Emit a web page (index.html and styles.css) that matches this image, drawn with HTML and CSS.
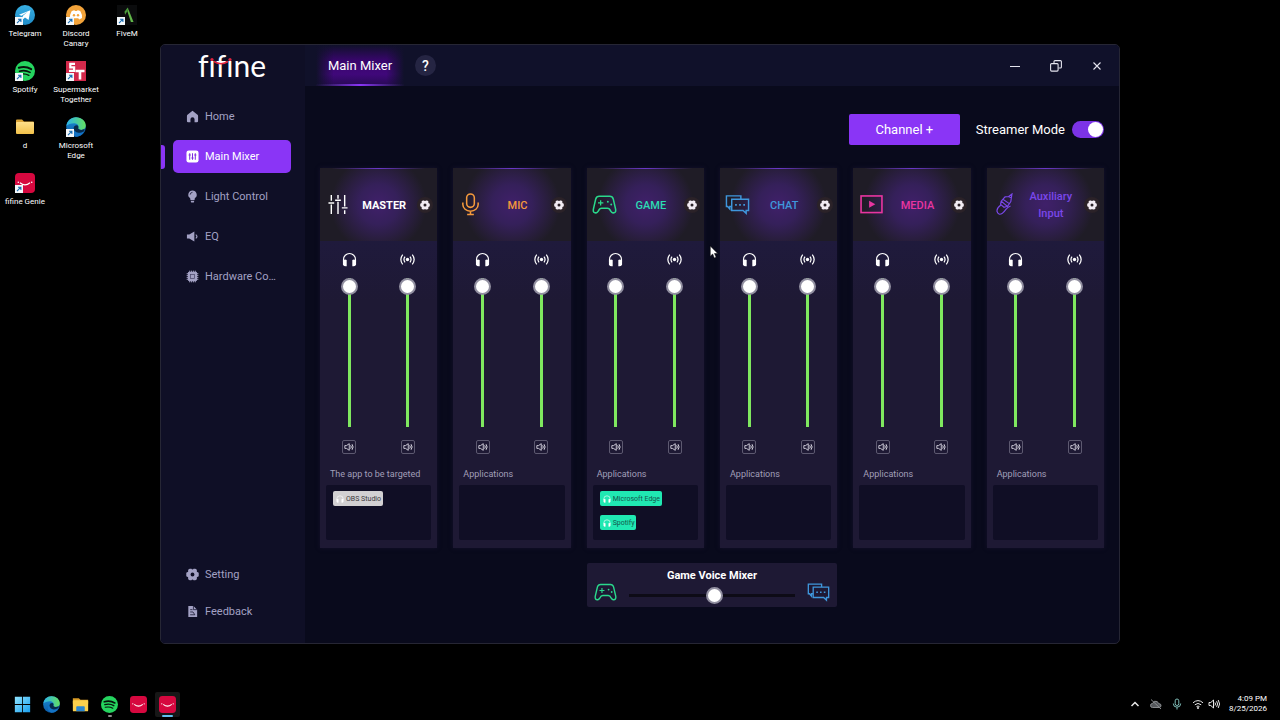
FILE: index.html
```html
<!DOCTYPE html>
<html lang="en">
<head>
<meta charset="utf-8">
<title>fifine Genie</title>
<link rel="stylesheet" href="styles.css">
</head>
<body>
<svg class="defs" aria-hidden="true">
  <defs>
    <linearGradient id="edge-a" x1="0" y1="0" x2="1" y2="0"><stop offset="0" stop-color="#2bb3ea"/><stop offset="1" stop-color="#63df61"/></linearGradient>
    <linearGradient id="edge-b" x1="0" y1="0" x2="0" y2="1"><stop offset="0" stop-color="#1b8fd8"/><stop offset="1" stop-color="#0c59a4"/></linearGradient>
    <linearGradient id="folder-g" x1="0" y1="0" x2="0" y2="1"><stop offset="0" stop-color="#ffe08a"/><stop offset="1" stop-color="#f2c14a"/></linearGradient>
    <linearGradient id="tele-g" x1="0" y1="0" x2="0" y2="1"><stop offset="0" stop-color="#38aee2"/><stop offset="1" stop-color="#1f8cc8"/></linearGradient>
    <linearGradient id="win-g" x1="0" y1="0" x2="1" y2="1"><stop offset="0" stop-color="#8fe3ff"/><stop offset="1" stop-color="#1aa0f0"/></linearGradient>
  </defs>
  <symbol id="shortcut" viewBox="0 0 8 8"><rect width="8" height="8" fill="#f4f8fb"/><path d="M2 6.2 5.6 2.4M3 2.2h2.9v2.9" fill="none" stroke="#1c6fb4" stroke-width="1.1"/></symbol>
  <symbol id="telegram" viewBox="0 0 20 20"><circle cx="10" cy="10" r="10" fill="url(#tele-g)"/><path d="M4 9.8 15.4 5.2 13.6 15 10 12.400l-1.900 1.800-.4-3.200 5-4.200-6.200 3.900z" fill="#fff"/></symbol>
  <symbol id="discord" viewBox="0 0 20 20"><circle cx="10" cy="10" r="10" fill="#f2a33a"/><path d="M5.600 6.200Q7.200 5.300 8.500 5.200l.5.900h2l.5-.9q1.500.1 2.900 1 2 3.300 1.600 6.900-1.300 1-2.900 1.300l-.8-1.200h-4.600l-.8 1.200q-1.600-.3-2.900-1.300-.300-3.600 1.600-6.900z" fill="#fff"/><circle cx="8" cy="10.300" r="1.200" fill="#f2a33a"/><circle cx="12" cy="10.300" r="1.200" fill="#f2a33a"/></symbol>
  <symbol id="fivem" viewBox="0 0 20 20"><rect width="20" height="20" fill="#0b0c0d"/><path d="M11.500 4.500 16.500 17h-2.600L10.300 6z" fill="#62b84a"/><path d="M7.500 6.800 10.700 2.500l.9 1.700-3.500 5.500z" fill="#4a9a3c"/></symbol>
  <symbol id="spotify" viewBox="0 0 20 20"><circle cx="10" cy="10" r="10" fill="#25d45f"/><path d="M3.800 6.800q6.800-2 12.400 1.400" fill="none" stroke="#07130b" stroke-width="2" stroke-linecap="round"/><path d="M4.500 10.200q5.800-1.600 10.600 1.200" fill="none" stroke="#07130b" stroke-width="1.600" stroke-linecap="round"/><path d="M5 13.300q4.900-1.200 8.900 1.100" fill="none" stroke="#07130b" stroke-width="1.300" stroke-linecap="round"/></symbol>
  <symbol id="market" viewBox="0 0 20 20"><rect width="20" height="20" fill="#d3294b"/><path d="M9 2.800H4.300v3.600h3.800v3.400H3" fill="none" stroke="#fff" stroke-width="2.200"/><path d="M9.500 10h9M14 10v8.500" fill="none" stroke="#fff" stroke-width="2.600"/></symbol>
  <symbol id="folder" viewBox="0 0 20 20"><path d="M1 3.500q0-1 1-1h5l2 2h9q1 0 1 1V9H1z" fill="#dca638"/><rect x="1" y="5" width="18" height="12" rx="1" fill="url(#folder-g)"/></symbol>
  <symbol id="edge" viewBox="0 0 20 20"><circle cx="10" cy="10" r="9.800" fill="url(#edge-b)"/><path d="M.3 9C1 3.800 5 .2 10 .2c5.500 0 9.800 3.700 9.800 8.400 0 2.700-2 4.400-4.600 4.400-2.200 0-3.600-.8-2.900-1.900 1-1.800-.600-4.800-4-4.800C5 6.300 1.500 7.600.3 9z" fill="url(#edge-a)"/><path d="M7.400 10.500c-.3 3.500 3.200 6.200 7.200 5.300 1.300-.3 2.600-1 3.500-1.800-1.300 3.300-4.400 5.800-8.100 5.800C6 18.500 4 13 7.400 10.500z" fill="#1372c4"/><path d="M7.600 11q.6-3.300 4.200-2.600.9 1 .5 2.700-.7 1.100 2.900 1.900l3.500-1-.6 2.200q-6 3.200-9.300-.2-1-1.300-1.200-3z" fill="#072a4c"/></symbol>
  <symbol id="genie" viewBox="0 0 20 20"><rect width="20" height="20" rx="4" fill="#d6083f"/><path d="M5 9.800q5 4.200 10 0" fill="none" stroke="#fff" stroke-width="1.200"/><circle cx="3.300" cy="9.200" r=".8" fill="#fff"/><circle cx="16.700" cy="9.200" r=".8" fill="#fff"/></symbol>
  <symbol id="windows" viewBox="0 0 20 20"><path d="M1 1h8.500v8.500H1zM10.500 1H19v8.500h-8.500zM1 10.500h8.500V19H1zM10.500 10.500H19V19h-8.500z" fill="url(#win-g)"/></symbol>
  <symbol id="explorer" viewBox="0 0 20 20"><path d="M1 2.500h7l2 2h9V9H1z" fill="#d99c26"/><rect x="1" y="5" width="18" height="13" rx="1" fill="#fbd04c"/><path d="M5 18v-5q0-1 1-1h8q1 0 1 1v5z" fill="#2a86cf"/></symbol>

  <symbol id="home" viewBox="0 0 14 14"><path d="M7 .8 12.400 5q.6.500.6 1.200V12q0 1.200-1.200 1.200H9.200V10a2.200 2.200 0 0 0-4.400 0v3.200H2.200Q1 13.200 1 12V6.200Q1 5.500 1.600 5z" fill="currentColor"/></symbol>
  <symbol id="mixer" viewBox="0 0 14 14"><rect x=".5" y=".5" width="13" height="13" rx="2.500" fill="#fff"/><path d="M4 3.500v7M7 3.500v7M10 3.500v7M2.800 5.500h2.400M5.800 8.500h2.400M8.800 5.500h2.400" stroke="#7d2be0" stroke-width="1.100"/></symbol>
  <symbol id="bulb" viewBox="0 0 14 14"><path d="M7 .5a4.500 4.500 0 0 1 2.600 8.200l-.4 2H4.800l-.4-2A4.500 4.500 0 0 1 7 .5zM5 11.500h4l-.6 2H5.600z" fill="currentColor"/><path d="M4.500 5A2.600 2.600 0 0 1 7 2.500" stroke="#10102a" stroke-width=".8" fill="none"/></symbol>
  <symbol id="speaker" viewBox="0 0 14 14"><path d="M1 4.800h2.500L9 1.500v11L3.500 9.200H1z" fill="currentColor"/><path d="M10.500 5q2.600 2 0 4" fill="none" stroke="currentColor" stroke-width="1.300"/></symbol>
  <symbol id="chip" viewBox="0 0 14 14"><path d="M4 .7v12.600M6 .7v12.600M8 .7v12.600M10 .7v12.600M.7 4h12.600M.7 6h12.600M.7 8h12.600M.7 10h12.600" stroke="currentColor" stroke-width="1"/><rect x="2" y="2" width="10" height="10" rx="1.500" fill="currentColor"/><rect x="4.800" y="4.800" width="4.400" height="4.400" fill="none" stroke="#4c4a6c" stroke-width=".8"/></symbol>
  <symbol id="gear" viewBox="0 0 14 14"><g fill="currentColor"><path fill-rule="evenodd" d="M4 .8h1.800q1.200 1.400 2.400 0H10l1.700 1v2.300l2 1.100v3.600l-2 1.100v2.300l-1.700 1H8.200q-1.200-1.400-2.400 0H4l-1.700-1V9.900l-2-1.100V5.200l2-1.100V1.800zM7 4.900a2.100 2.100 0 1 0 0 4.200 2.100 2.100 0 0 0 0-4.200z"/></g></symbol>
  <symbol id="doc" viewBox="0 0 14 14"><path d="M2.500 1H8l4 4v8H2.500z" fill="currentColor"/><path d="M8 1v4h4M4.500 5H7M4.500 7.500h3l2 3M4.500 10.500h5" stroke="#10102a" stroke-width=".8" fill="none"/></symbol>

  <symbol id="sliders" viewBox="0 0 22 22"><path d="M4 1v6M4 11v10M11 1v4M11 8v13M18 1v12M18 17v4M1 9.500h6M8 6.500h6M15 14.500h6" fill="none" stroke="currentColor" stroke-width="1.500"/></symbol>
  <symbol id="mic" viewBox="0 0 24 24"><rect x="8" y="1" width="8" height="14" rx="4" fill="none" stroke="currentColor" stroke-width="1.600"/><path d="M4 10v2a8 7 0 0 0 16 0v-2M12 19v3.500M8.500 22.500h7" fill="none" stroke="currentColor" stroke-width="1.600"/></symbol>
  <symbol id="game" viewBox="0 0 26 20"><path d="M7.500 1.500h11q2.800 0 3.600 2.700L24.600 15q.6 4-2.800 3.700-1.300 0-2.300-1.700-1.400-3-3.400-3H9.900q-2 0-3.400 3-1 1.700-2.300 1.700Q.8 19 1.400 15L3.900 4.200q.8-2.700 3.600-2.700z" fill="none" stroke="currentColor" stroke-width="1.600"/><path d="M9 5.500v5.600M6.200 8.300h5.600" stroke="currentColor" stroke-width="1.300"/><circle cx="16.500" cy="7.200" r="1" fill="currentColor"/><circle cx="20" cy="10" r="1" fill="currentColor"/></symbol>
  <symbol id="chat" viewBox="0 0 26 20"><path d="M6.500 12H5v2.600L2.800 12H1.500V1h15v3M7 4.500h17.500v11.700H22v3L18.800 16.200H7z" fill="none" stroke="currentColor" stroke-width="1.500"/><path d="M10.500 10.300h1.800M14.700 10.300h1.800M19 10.300h1.800" stroke="currentColor" stroke-width="1.800"/></symbol>
  <symbol id="media" viewBox="0 0 24 20"><rect x="1" y="1" width="22" height="17.500" fill="none" stroke="currentColor" stroke-width="1.700"/><path d="M9.500 6v7.500l6.500-3.700z" fill="currentColor"/></symbol>
  <symbol id="jack" viewBox="0 0 18 24"><path d="m16.800 1-.7 4.300-2.700-1.800zM13.400 3.600 9.600 4l-4 4.600 6.500 5.300 3.500-5 .5-3.600M7.300 6.500l6.700 4.600M5.600 8.600l-.7 3.300 3.600 3 3.600-1M5.200 12.500Q.6 15.800 1.200 19.300q1.500 4.200 5.200 2.200 2.200-1.600 4.300-4.600 1.700-2.300 4.600-3.400" fill="none" stroke="currentColor" stroke-width="1.200"/></symbol>
  <symbol id="phones" viewBox="0 0 16 16"><path d="M1.600 10V8a6.400 6.400 0 0 1 12.800 0v2" fill="none" stroke="currentColor" stroke-width="1.200"/><path d="M1 9q2-1.800 4-.5v6.700q-3 .5-4-1.700zM15 9q-2-1.800-4-.5v6.700q3 .5 4-1.700z" fill="currentColor"/></symbol>
  <symbol id="cast" viewBox="0 0 16 12"><circle cx="8" cy="6" r="1.800" fill="currentColor"/><path d="M5.400 3q-2.400 3 0 6M10.600 3q2.400 3 0 6M2.900 .8q-4 5.200 0 10.400M13.100 .8q4 5.200 0 10.400" fill="none" stroke="currentColor" stroke-width="1.300"/></symbol>
  <symbol id="sound" viewBox="0 0 12 12"><path d="M1 4.300h2L6.300 2v8L3 7.700H1z" fill="none" stroke="currentColor"/><path d="M8 4q1.500 2 0 4M9.700 2.700q2.400 3.300 0 6.600" fill="none" stroke="currentColor" stroke-width="1.100"/></symbol>
</svg>

<main class="desktop">
  <div class="shortcuts">
    <div class="shortcut-col">
      <a class="shortcut" href="#"><span class="pic"><svg><use href="#telegram"/></svg><svg class="arrow"><use href="#shortcut"/></svg></span>Telegram</a>
      <a class="shortcut" href="#"><span class="pic"><svg><use href="#spotify"/></svg><svg class="arrow"><use href="#shortcut"/></svg></span>Spotify</a>
      <a class="shortcut" href="#"><span class="pic"><svg><use href="#folder"/></svg></span>d</a>
      <a class="shortcut" href="#"><span class="pic"><svg><use href="#genie"/></svg><svg class="arrow"><use href="#shortcut"/></svg></span>fifine Genie</a>
    </div>
    <div class="shortcut-col">
      <a class="shortcut" href="#"><span class="pic"><svg><use href="#discord"/></svg><svg class="arrow"><use href="#shortcut"/></svg></span>Discord<br>Canary</a>
      <a class="shortcut" href="#"><span class="pic"><svg><use href="#market"/></svg><svg class="arrow"><use href="#shortcut"/></svg></span>Supermarket<br>Together</a>
      <a class="shortcut" href="#"><span class="pic"><svg><use href="#edge"/></svg><svg class="arrow"><use href="#shortcut"/></svg></span>Microsoft<br>Edge</a>
    </div>
    <div class="shortcut-col">
      <a class="shortcut" href="#"><span class="pic"><svg><use href="#fivem"/></svg><svg class="arrow"><use href="#shortcut"/></svg></span>FiveM</a>
    </div>
  </div>

  <section class="window" aria-label="fifine Genie">
    <aside class="sidebar">
      <div class="logo">fifine<svg class="smile" viewBox="0 0 26 14"><path d="M1 0h6v8H1zM19 0h6v8h-6z" fill="#0f0f26"/><circle cx="4" cy="6.500" r="1.600" fill="#e0243f"/><circle cx="22" cy="6.500" r="1.600" fill="#e0243f"/><path d="M6 8.500q7 4.500 14 0" fill="none" stroke="#e0243f" stroke-width="1.500"/></svg></div>
      <nav class="nav">
        <a class="nav-item" href="#"><svg><use href="#home"/></svg>Home</a>
        <a class="nav-item active" href="#"><svg><use href="#mixer"/></svg>Main Mixer</a>
        <a class="nav-item" href="#"><svg><use href="#bulb"/></svg>Light Control</a>
        <a class="nav-item" href="#"><svg><use href="#speaker"/></svg>EQ</a>
        <a class="nav-item" href="#"><svg><use href="#chip"/></svg>Hardware Co…</a>
      </nav>
      <nav class="nav nav-foot">
        <a class="nav-item" href="#"><svg><use href="#gear"/></svg>Setting</a>
        <a class="nav-item" href="#"><svg><use href="#doc"/></svg>Feedback</a>
      </nav>
    </aside>

    <div class="content">
      <header class="titlebar">
        <button class="tab">Main Mixer</button>
        <button class="help">?</button>
        <div class="controls">
          <button aria-label="Minimize"><svg viewBox="0 0 12 12"><path d="M1 6.500h10"/></svg></button>
          <button aria-label="Restore"><svg viewBox="0 0 12 12"><rect x=".6" y="3.600" width="7.500" height="7.500" rx="1"/><path d="M4 3.500V1.600q0-1 1-1h5.400q1 0 1 1V7q0 1-1 1H8.500"/></svg></button>
          <button aria-label="Close"><svg viewBox="0 0 12 12"><path d="m2.500 2.500 7 7M9.500 2.500l-7 7"/></svg></button>
        </div>
      </header>

      <div class="toolbar">
        <button class="add">Channel +</button>
        <label class="mode">Streamer Mode<input type="checkbox" class="toggle" checked></label>
      </div>

      <div class="mixer">
        <article class="strip master">
          <header><svg class="kind"><use href="#sliders"/></svg><h2>MASTER</h2><button class="gear" aria-label="Master settings"><svg><use href="#gear"/></svg></button></header>
          <div class="faders">
            <div class="fader"><label for="f1"><svg class="out"><use href="#phones"/></svg></label><input id="f1" type="range" value="100" aria-label="Master headphones"><button class="mute" aria-label="Mute"><svg><use href="#sound"/></svg></button></div>
            <div class="fader"><label for="f2"><svg class="out"><use href="#cast"/></svg></label><input id="f2" type="range" value="100" aria-label="Master stream"><button class="mute" aria-label="Mute"><svg><use href="#sound"/></svg></button></div>
          </div>
          <h3>The app to be targeted</h3>
          <div class="apps"><span class="app grey"><svg><use href="#phones"/></svg>OBS Studio</span></div>
        </article>
        <article class="strip voice">
          <header><svg class="kind"><use href="#mic"/></svg><h2>MIC</h2><button class="gear" aria-label="Mic settings"><svg><use href="#gear"/></svg></button></header>
          <div class="faders">
            <div class="fader"><label for="f3"><svg class="out"><use href="#phones"/></svg></label><input id="f3" type="range" value="100" aria-label="Mic headphones"><button class="mute" aria-label="Mute"><svg><use href="#sound"/></svg></button></div>
            <div class="fader"><label for="f4"><svg class="out"><use href="#cast"/></svg></label><input id="f4" type="range" value="100" aria-label="Mic stream"><button class="mute" aria-label="Mute"><svg><use href="#sound"/></svg></button></div>
          </div>
          <h3>Applications</h3>
          <div class="apps"></div>
        </article>
        <article class="strip game">
          <header><svg class="kind"><use href="#game"/></svg><h2>GAME</h2><button class="gear" aria-label="Game settings"><svg><use href="#gear"/></svg></button></header>
          <div class="faders">
            <div class="fader"><label for="f5"><svg class="out"><use href="#phones"/></svg></label><input id="f5" type="range" value="100" aria-label="Game headphones"><button class="mute" aria-label="Mute"><svg><use href="#sound"/></svg></button></div>
            <div class="fader"><label for="f6"><svg class="out"><use href="#cast"/></svg></label><input id="f6" type="range" value="100" aria-label="Game stream"><button class="mute" aria-label="Mute"><svg><use href="#sound"/></svg></button></div>
          </div>
          <h3>Applications</h3>
          <div class="apps"><span class="app"><svg><use href="#phones"/></svg>Microsoft Edge</span><span class="app"><svg><use href="#phones"/></svg>Spotify</span></div>
        </article>
        <article class="strip chat">
          <header><svg class="kind"><use href="#chat"/></svg><h2>CHAT</h2><button class="gear" aria-label="Chat settings"><svg><use href="#gear"/></svg></button></header>
          <div class="faders">
            <div class="fader"><label for="f7"><svg class="out"><use href="#phones"/></svg></label><input id="f7" type="range" value="100" aria-label="Chat headphones"><button class="mute" aria-label="Mute"><svg><use href="#sound"/></svg></button></div>
            <div class="fader"><label for="f8"><svg class="out"><use href="#cast"/></svg></label><input id="f8" type="range" value="100" aria-label="Chat stream"><button class="mute" aria-label="Mute"><svg><use href="#sound"/></svg></button></div>
          </div>
          <h3>Applications</h3>
          <div class="apps"></div>
        </article>
        <article class="strip media">
          <header><svg class="kind"><use href="#media"/></svg><h2>MEDIA</h2><button class="gear" aria-label="Media settings"><svg><use href="#gear"/></svg></button></header>
          <div class="faders">
            <div class="fader"><label for="f9"><svg class="out"><use href="#phones"/></svg></label><input id="f9" type="range" value="100" aria-label="Media headphones"><button class="mute" aria-label="Mute"><svg><use href="#sound"/></svg></button></div>
            <div class="fader"><label for="f10"><svg class="out"><use href="#cast"/></svg></label><input id="f10" type="range" value="100" aria-label="Media stream"><button class="mute" aria-label="Mute"><svg><use href="#sound"/></svg></button></div>
          </div>
          <h3>Applications</h3>
          <div class="apps"></div>
        </article>
        <article class="strip aux">
          <header><svg class="kind"><use href="#jack"/></svg><h2>Auxiliary Input</h2><button class="gear" aria-label="Auxiliary settings"><svg><use href="#gear"/></svg></button></header>
          <div class="faders">
            <div class="fader"><label for="f11"><svg class="out"><use href="#phones"/></svg></label><input id="f11" type="range" value="100" aria-label="Auxiliary headphones"><button class="mute" aria-label="Mute"><svg><use href="#sound"/></svg></button></div>
            <div class="fader"><label for="f12"><svg class="out"><use href="#cast"/></svg></label><input id="f12" type="range" value="100" aria-label="Auxiliary stream"><button class="mute" aria-label="Mute"><svg><use href="#sound"/></svg></button></div>
          </div>
          <h3>Applications</h3>
          <div class="apps"></div>
        </article>

        <div class="balance">
          <svg class="game"><use href="#game"/></svg>
          <div class="balance-mid"><label for="balance">Game Voice Mixer</label><input id="balance" type="range" value="52"></div>
          <svg class="chat"><use href="#chat"/></svg>
        </div>
      </div>
    </div>
  </section>

  <svg class="cursor" viewBox="0 0 10 15"><path d="M1 1v11l2.600-2.300L5.300 14l2-.9-1.800-4H9z" fill="#fff" stroke="#111" stroke-width=".6"/></svg>
</main>

<footer class="taskbar">
  <div class="pinned">
    <button aria-label="Start"><svg><use href="#windows"/></svg></button>
    <button aria-label="Microsoft Edge"><svg><use href="#edge"/></svg></button>
    <button aria-label="File Explorer"><svg><use href="#explorer"/></svg></button>
    <button class="open" aria-label="Spotify"><svg><use href="#spotify"/></svg></button>
    <button aria-label="fifine Genie"><svg><use href="#genie"/></svg></button>
    <button class="current" aria-label="fifine Genie"><svg><use href="#genie"/></svg></button>
  </div>
  <div class="tray">
    <svg viewBox="0 0 12 12"><path d="m2.500 8 3.500-3.500L9.500 8" stroke-width="1.500"/></svg>
    <svg class="cloud" viewBox="0 0 12 12"><path d="M2.500 9.500a2 2 0 0 1 0-4Q4 2 7 3.500q1 .5 1.500 2 3 .3 2.500 2.500-.5 1.500-2 1.500z" fill="#55585c"/><path d="m1 1.500 10 9.500"/></svg>
    <svg class="recording" viewBox="0 0 12 12"><rect x="4.200" y="1" width="3.600" height="6.500" rx="1.800"/><path d="M2.300 5.500a3.700 3.700 0 0 0 7.400 0M6 9.300v2.200"/></svg>
    <span class="status"><svg viewBox="0 0 12 12"><path d="M1 4.800q5-4.400 10 0M2.800 6.800q3.200-2.800 6.400 0M4.500 8.600q1.500-1.200 3 0"/><circle cx="6" cy="10" r=".7"/></svg><svg viewBox="0 0 12 12"><path d="M1 4.500h1.800L5.500 2v8L2.800 7.500H1zM7 4.500q1 1.500 0 3M8.600 3.200q2 2.800 0 5.600M10.200 2q2.800 4 0 8"/></svg></span>
    <time class="clock" datetime="2026-08-25T16:09">4:09 PM<br>8/25/2026</time>
  </div>
</footer>
</body>
</html>
```
FILE: styles.css
```css
* { box-sizing: border-box; }

body {
  margin: 0;
  min-height: 100vh;
  display: flex;
  flex-direction: column;
  background: #000;
  color: #fff;
  font-family: Roboto, "Open Sans", sans-serif;
}

button {
  padding: 0;
  border: 0;
  background: none;
  color: inherit;
  font: inherit;
}

svg { display: block; flex: none; }
a { color: inherit; text-decoration: none; }
h2, h3 { margin: 0; }
.defs { position: absolute; width: 0; height: 0; }

/* Desktop */
.desktop { flex: 1; display: flex; position: relative; }

.shortcuts {
  position: absolute;
  display: flex;
  gap: 1px;
  padding-top: 5px;
  font-size: 8px;
  line-height: 10px;
}
.shortcut-col { width: 50px; display: flex; flex-direction: column; gap: 4px; }
.shortcut {
  min-height: 52px;
  display: flex;
  flex-direction: column;
  align-items: center;
  text-align: center;
}
.pic { position: relative; margin-bottom: 4px; }
.pic svg { width: 20px; height: 20px; }
.pic .arrow { position: absolute; left: 0; bottom: 0; width: 8px; height: 8px; }
.cursor { position: absolute; left: 709px; top: 245px; width: 10px; height: 14px; }

/* App window */
.window {
  flex: 1;
  margin: 44px 12.5%;
  display: flex;
  border: 1px solid #262634;
  border-radius: 5px;
  background: #090a1c;
  overflow: hidden;
}

.sidebar {
  width: 144px;
  flex: none;
  display: flex;
  flex-direction: column;
  padding: 0 14px 15px 12px;
  background: #0f0f26;
}
.logo {
  position: relative;
  align-self: center;
  height: 42px;
  margin-bottom: 13px;
  font-family: Lato, sans-serif;
  font-size: 30px;
  line-height: 40px;
  font-variant-ligatures: none;
}
.smile { position: absolute; left: 10px; top: 8px; width: 26px; height: 14px; }

.nav { display: flex; flex-direction: column; gap: 7px; }
.nav-foot { margin-top: auto; gap: 4px; }
.nav-item {
  position: relative;
  height: 33px;
  display: flex;
  align-items: center;
  gap: 6px;
  padding-left: 13px;
  border-radius: 5px;
  color: #a3a1c4;
  font-size: 11px;
  white-space: nowrap;
}
.nav-item svg { width: 13px; height: 13px; }
.nav-item.active { background: #8a35f6; color: #fff; }
.nav-item.active::before {
  content: "";
  position: absolute;
  left: -14px;
  width: 6px;
  height: 24px;
  border-radius: 4px;
  background: #8a35f6;
}

.content { flex: 1; min-width: 0; display: flex; flex-direction: column; }
.titlebar {
  height: 41px;
  display: flex;
  align-items: center;
  padding: 0 16px 0 11px;
  background: #10112a;
}
.tab {
  align-self: stretch;
  width: 88px;
  padding-top: 2px;
  border-bottom: 2px solid;
  border-image: linear-gradient(90deg, transparent, #8a35f6 50%, transparent) 1;
  background:
    linear-gradient(90deg, #10112a, transparent 20%, transparent 80%, #10112a),
    linear-gradient(#10112a, #38066c 40%, #40087a 75%, #2b0a5a);
  font-size: 13px;
}
.help {
  width: 21px;
  height: 21px;
  margin-left: 11px;
  border-radius: 50%;
  background: #252543;
  font-size: 14px;
  font-weight: 500;
}
.controls { display: flex; gap: 29px; margin-left: auto; }
.controls svg { width: 12px; height: 12px; fill: none; stroke: #e4e4ee; stroke-width: 1.1; }

.toolbar {
  display: flex;
  justify-content: flex-end;
  align-items: center;
  gap: 16px;
  padding: 28px 15px 23px;
  font-size: 13px;
}
.add { width: 111px; height: 31px; border-radius: 2px; background: #8a35f6; }
.mode { display: flex; align-items: center; gap: 7px; }
.toggle {
  appearance: none;
  width: 32px;
  height: 17px;
  margin: 0;
  padding: 1px;
  display: flex;
  justify-content: flex-end;
  border-radius: 9px;
  background: #7c33e6;
}
.toggle::before { content: ""; width: 15px; height: 15px; border-radius: 50%; background: #fff; }

/* Channel strips */
.mixer {
  display: grid;
  grid-template-columns: repeat(6, 1fr);
  gap: 15px 16px;
  padding: 0 15px 36px;
}
.strip { background: #1e1934; box-shadow: 0 0 4px #15122c; }
.strip header {
  position: relative;
  height: 73px;
  display: grid;
  grid-template-columns: 28px 1fr 20px;
  align-items: center;
  padding: 0 2px 0 5px;
  background: radial-gradient(circle at 50% 50%, #40206a 0, #35205a 20px, #1f1c26 48px);
}
.strip header::before {
  content: "";
  position: absolute;
  inset: 0 0 auto;
  height: 1px;
  background: linear-gradient(90deg, transparent 10%, #6a38c8 50%, transparent 90%);
}
.kind { width: 25px; height: 23px; }
.master .kind { width: 26px; height: 21px; }
.media .kind { width: 27px; height: 19px; }
.strip h2 {
  padding-top: 1px;
  font-size: 11px;
  line-height: 17px;
  font-weight: 500;
  text-align: center;
}
.gear {
  width: 16px;
  height: 16px;
  display: grid;
  place-items: center;
  justify-self: center;
  border-radius: 50%;
  background: #2b2228;
  color: #f2ecf4;
}
.gear svg { width: 10px; height: 10px; }

.strip.master h2 { font-weight: 700; }
.master header { color: #fff; }
.voice header { color: #f59a3c; }
.game header, .balance .game { color: #2ad98c; }
.game h2 { color: #2bdcb2; }
.chat header, .balance .chat { color: #3f97dc; }
.media header { color: #e835a0; }
.aux header { color: #7a47ea; }

.faders {
  display: grid;
  grid-template-columns: 1fr 1fr;
  padding-top: 11px;
  background: linear-gradient(#1f1a3c, #1e1934 60px);
}
.fader { display: flex; flex-direction: column; align-items: center; }
.out { width: 15px; height: 15px; }
.fader input {
  appearance: none;
  writing-mode: vertical-lr;
  direction: rtl;
  width: 17px;
  height: 149px;
  margin: 11px 0 13px;
  background: linear-gradient(#7fe85f, #7fe85f) center / 3px 100% no-repeat;
}
input[type="range"]::-webkit-slider-thumb {
  appearance: none;
  width: 17px;
  height: 17px;
  border: 2px solid #918fa0;
  border-radius: 50%;
  background: #fff;
}
.mute {
  width: 14px;
  height: 14px;
  display: grid;
  place-items: center;
  border: 1px solid #5d5970;
  border-radius: 2px;
  color: #e8e6f0;
}
.mute svg { width: 10px; height: 10px; }
.strip h3 {
  margin: 14px 10px 5px;
  color: #a19fb8;
  font-size: 9px;
  line-height: 12px;
  font-weight: 400;
  white-space: nowrap;
}
.apps {
  height: 55px;
  margin: 0 6px 8px;
  display: flex;
  flex-direction: column;
  align-items: flex-start;
  gap: 9px;
  padding: 6px 7px;
  border-radius: 2px;
  background: #100e25;
}
.app {
  height: 15px;
  display: flex;
  align-items: center;
  gap: 2px;
  padding: 0 2px 0 3px;
  border-radius: 2px;
  background: #20e8b2;
  color: #14564c;
  font-size: 7px;
  white-space: nowrap;
}
.app.grey { background: #d2d0d2; color: #3c3a40; }
.app svg { width: 8px; height: 8px; color: #fff; }

.balance {
  grid-column: 3 / span 2;
  height: 44px;
  display: flex;
  align-items: flex-end;
  gap: 12px;
  padding: 5px 7px;
  border-radius: 2px;
  background: #1e1934;
}
.balance > svg { width: 23px; height: 20px; }
.balance-mid {
  flex: 1;
  align-self: flex-start;
  display: flex;
  flex-direction: column;
  align-items: center;
}
.balance label { font-size: 11px; line-height: 16px; font-weight: 700; }
.balance input {
  appearance: none;
  width: 100%;
  height: 17px;
  margin: 3px 0 0;
  background: linear-gradient(#0d0b16, #0d0b16) center / 100% 3px no-repeat;
}

/* Taskbar */
.taskbar {
  height: 32px;
  display: flex;
  align-items: center;
  justify-content: space-between;
  padding: 0 13px 0 10px;
}
.pinned { display: flex; gap: 4px; }
.pinned button {
  position: relative;
  width: 25px;
  height: 25px;
  display: grid;
  place-items: center;
  border-radius: 2px;
}
.pinned svg { width: 17px; height: 17px; }
.pinned .current { background: #171717; }
.pinned .current::after, .pinned .open::after {
  content: "";
  position: absolute;
  bottom: 0;
  width: 11px;
  height: 2px;
  border-radius: 1px;
  background: #62c0f0;
}
.pinned .open::after { width: 4px; background: #8d8d8d; }
.tray { display: flex; align-items: center; gap: 9px; }
.tray svg { width: 12px; height: 12px; fill: none; stroke: #e6e6e6; stroke-width: 1; }
.tray .cloud { stroke: #8a8d90; }
.tray .recording { stroke: #7fbdb8; }
.status { display: flex; gap: 4px; }
.clock { font-size: 8px; line-height: 10px; text-align: right; }
```
